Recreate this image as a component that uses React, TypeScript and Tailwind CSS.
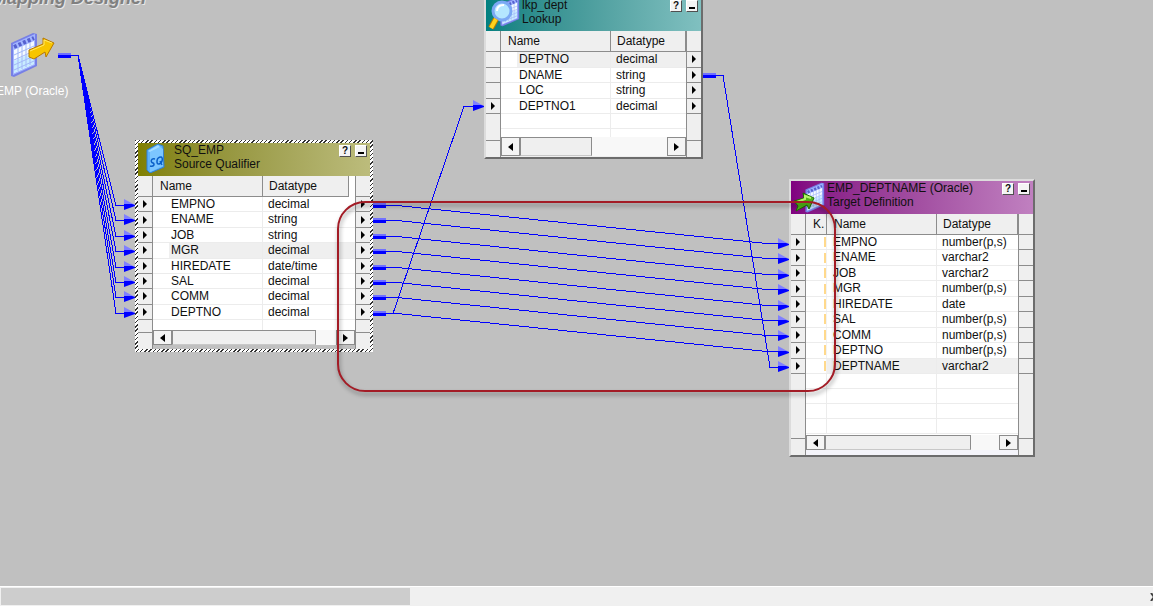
import type { ReactNode } from "react";
import clsx from "clsx";

type Port = {
  name: string;
  datatype: string;
  input?: boolean;
  output?: boolean;
  selected?: boolean;
};

type NodeProps = {
  title: string;
  kind: string;
  icon: ReactNode;
  ports: Port[];
  blanks: number;
  keyColumn?: boolean;
  className: string;
  titleClass: string;
  columnsClass: string;
  headClass: string;
  portsClass: string;
  footClass: string;
  scrollClass: string;
  thumbClass: string;
};

const sourcePorts: Port[] = [
  { name: "EMPNO", datatype: "decimal", input: true, output: true },
  { name: "ENAME", datatype: "string", input: true, output: true },
  { name: "JOB", datatype: "string", input: true, output: true },
  {
    name: "MGR",
    datatype: "decimal",
    input: true,
    output: true,
    selected: true,
  },
  { name: "HIREDATE", datatype: "date/time", input: true, output: true },
  { name: "SAL", datatype: "decimal", input: true, output: true },
  { name: "COMM", datatype: "decimal", input: true, output: true },
  { name: "DEPTNO", datatype: "decimal", input: true, output: true },
];

const lookupPorts: Port[] = [
  { name: "DEPTNO", datatype: "decimal", output: true, selected: true },
  { name: "DNAME", datatype: "string", output: true },
  { name: "LOC", datatype: "string", output: true },
  { name: "DEPTNO1", datatype: "decimal", input: true, output: true },
];

const targetPorts: Port[] = [
  { name: "EMPNO", datatype: "number(p,s)", input: true },
  { name: "ENAME", datatype: "varchar2", input: true },
  { name: "JOB", datatype: "varchar2", input: true },
  { name: "MGR", datatype: "number(p,s)", input: true },
  { name: "HIREDATE", datatype: "date", input: true },
  { name: "SAL", datatype: "number(p,s)", input: true },
  { name: "COMM", datatype: "number(p,s)", input: true },
  { name: "DEPTNO", datatype: "number(p,s)", input: true },
  { name: "DEPTNAME", datatype: "varchar2", input: true, selected: true },
];

function SheetIcon() {
  return (
    <g>
      <path d="M2 11 L24 1 L28 2 V34 L5 45 L2 44 Z" fill="#7780e6" />
      <path d="M4 12 L26 2 V33 L4 43 Z" fill="#a3b6ff" />
      <path d="M5 18 L25 9 V32 L5 41 Z" fill="#f4faff" />
      <path d="M5 29 L25 20 V32 L5 41 Z" fill="#c8ecff" />
      <path
        d="M5 23 L25 14 M5 28 L25 19 M5 33 L25 24 M5 38 L25 29 M9 15 V39 M13 13 V37 M17 11 V35 M21 10 V33"
        stroke="#a3b8f8"
        strokeWidth="1"
        fill="none"
      />
      <path
        d="M5 15 L25 6"
        stroke="#5661cf"
        strokeWidth="4"
        strokeDasharray="3 2"
      />
    </g>
  );
}

function SourceIcon() {
  return (
    <svg width="46" height="46" viewBox="0 0 46 46" aria-hidden="true">
      <SheetIcon />
      <path
        d="M20 18 L34 12 V6 L45 11 L37 25 L36 20 L25 27 L20 25 Z"
        fill="#f7c500"
        stroke="#b87900"
        strokeWidth="1"
      />
      <path
        d="M21 19 L35 13 V8 L43 11"
        fill="none"
        stroke="#ffe96b"
        strokeWidth="1"
      />
    </svg>
  );
}

function QualifierIcon() {
  return (
    <svg width="20" height="30" viewBox="0 0 20 30" aria-hidden="true">
      <path
        d="M1 7 L12 1 L17 3 L18 24 L4 30 L1 27 Z"
        fill="#5cb2fb"
        stroke="#2f7fd8"
      />
      <path d="M4 9 L14 4 L17 6 V23 L4 29 Z" fill="#7cc6ff" />
      <path d="M2 8 L12 2 L14 4 L4 9 Z" fill="#a5dcff" />
      <path
        d="M9 16 C5 15 4 19 7 20 C9 21 8 24 4 23 M15 14 C10 14 10 22 13 21 C17 20 17 14 15 14 M14 18 L16 22"
        fill="none"
        stroke="#0a5fc8"
        strokeWidth="1.5"
      />
    </svg>
  );
}

function LookupIcon() {
  return (
    <svg width="32" height="32" viewBox="0 0 32 32" aria-hidden="true">
      <g transform="translate(11 -1) scale(.72 .65)">
        <SheetIcon />
      </g>
      <circle
        cx="14"
        cy="13"
        r="9"
        fill="#b4e6ff"
        stroke="#7ba8f4"
        strokeWidth="3"
      />
      <path
        d="M9 13 C9 9 12 7 16 7"
        fill="none"
        stroke="#ffffff"
        strokeWidth="2"
      />
      <path d="M8 21 L3 30" stroke="#b97800" strokeWidth="6" />
      <path d="M8 21 L3 30" stroke="#ffd21c" strokeWidth="4" />
    </svg>
  );
}

function TargetIcon() {
  return (
    <svg width="32" height="33" viewBox="0 0 32 33" aria-hidden="true">
      <g transform="translate(11 1) scale(.72 .68)">
        <SheetIcon />
      </g>
      <path
        d="M1 20 L11 17 L10 12 L21 17 L16 28 L14 24 L3 30 L5 25 Z"
        fill="#4fb416"
        stroke="#1c6d00"
      />
      <path
        d="M4 21 L12 18 L12 15 L18 17"
        fill="none"
        stroke="#b5f36a"
        strokeWidth="2"
      />
    </svg>
  );
}

function Gutter({
  props,
  side,
}: {
  props: NodeProps;
  side: "input" | "output";
}) {
  return (
    <div
      className={clsx(
        "flex w-[15px] shrink-0 flex-col border-[#8c8c8c] bg-[#efefef]",
        side === "input" ? "border-r" : "border-l",
      )}
    >
      <div className="h-[21px] border-b border-[#8c8c8c]" />
      <div className={clsx("grid auto-rows-fr", props.portsClass)}>
        {props.ports.map((port) => (
          <div
            key={port.name}
            className="flex items-center justify-center border-b border-[#8c8c8c]"
          >
            {port[side] && (
              <svg width="4" height="8" viewBox="0 0 4 8" aria-hidden="true">
                <path d="M0 0 L4 4 L0 8 Z" fill="#000" />
              </svg>
            )}
          </div>
        ))}
      </div>
      <div className="flex-1" />
      <div className="h-[17px] border-t border-[#8c8c8c]" />
    </div>
  );
}

function HeaderCell({
  children,
  className,
}: {
  children: ReactNode;
  className: string;
}) {
  return (
    <th
      className={clsx(
        "border-r border-b border-[#8c8c8c] bg-[#efefef] text-left leading-5 font-normal",
        className,
      )}
    >
      {children}
    </th>
  );
}

function ScrollButton({ left }: { left?: boolean }) {
  return (
    <button
      type="button"
      aria-label={left ? "Scroll left" : "Scroll right"}
      className="flex w-[19px] shrink-0 items-center justify-center border border-[#8c8c8c] bg-[#f4f4f4]"
    >
      <svg width="5" height="8" viewBox="0 0 5 8" aria-hidden="true">
        <path d={left ? "M5 0 L0 4 L5 8 Z" : "M0 0 L5 4 L0 8 Z"} fill="#000" />
      </svg>
    </button>
  );
}

function TitleButton({
  label,
  children,
}: {
  label: string;
  children: ReactNode;
}) {
  return (
    <button
      type="button"
      aria-label={label}
      className="flex h-3 w-3 items-center justify-center border border-t-white border-r-[#505050] border-b-[#505050] border-l-white bg-[#f4f4f4] text-[10px] leading-3 font-bold"
    >
      {children}
    </button>
  );
}

function MappingNode(props: NodeProps) {
  const { ports, keyColumn, columnsClass } = props;

  return (
    <section className={clsx("absolute flex flex-col", props.className)}>
      {/* Title */}

      <header
        className={clsx(
          "flex h-[33px] shrink-0 items-start bg-linear-to-r",
          props.titleClass,
        )}
      >
        <div className="flex w-9 shrink-0 justify-center">{props.icon}</div>
        <div className="flex-1 leading-[14px] whitespace-nowrap">
          <h2>{props.title}</h2>
          <p>{props.kind}</p>
        </div>
        <div className="flex gap-1 pt-[2px] pr-[3px]">
          <TitleButton label="Help">?</TitleButton>
          <TitleButton label="Minimize">
            <span className="mt-1 h-[2px] w-[6px] bg-black" />
          </TitleButton>
        </div>
      </header>

      {/* Ports */}

      <div className="flex min-h-0 flex-1">
        <Gutter props={props} side="input" />

        <div className="flex min-w-0 flex-1 flex-col bg-white">
          <table className="block">
            <thead className="block h-[21px]">
              <tr className={clsx("grid h-[18px]", columnsClass)}>
                {keyColumn && <HeaderCell className="pl-[7px]">K.</HeaderCell>}
                <HeaderCell className="pl-[7px]">Name</HeaderCell>
                <HeaderCell className={props.headClass}>Datatype</HeaderCell>
              </tr>
            </thead>
            <tbody className={clsx("grid auto-rows-fr", props.portsClass)}>
              {ports.map((port) => (
                <tr
                  key={port.name}
                  className={clsx(
                    "grid border-b border-[#ececec] leading-[14px]",
                    columnsClass,
                  )}
                >
                  {keyColumn && (
                    <td className="flex items-center justify-end border-r border-[#f2f2f2]">
                      <span className="h-[10px] w-[2px] bg-[#ffd98c]" />
                    </td>
                  )}
                  <td
                    className={clsx(
                      "border-r border-[#ececec]",
                      !keyColumn && "pl-4",
                    )}
                  >
                    <div
                      className={clsx(
                        "h-full",
                        keyColumn ? "pl-[6px]" : "pl-[2px]",
                        port.selected && "bg-[#efefef]",
                      )}
                    >
                      {port.name}
                    </div>
                  </td>
                  <td
                    className={clsx(
                      "pl-[5px]",
                      port.selected && "bg-[#efefef]",
                    )}
                  >
                    {port.datatype}
                  </td>
                </tr>
              ))}
            </tbody>
          </table>

          <div className="min-h-0 flex-1 overflow-hidden">
            {Array.from({ length: props.blanks }, (_, i) => (
              <div
                key={i}
                className={clsx(
                  "grid h-[15px] border-b border-[#ececec]",
                  columnsClass,
                )}
              >
                {keyColumn && <div className="border-r border-[#ececec]" />}
                <div className="border-r border-[#ececec]" />
              </div>
            ))}
          </div>

          {/* Scrollbar */}

          <div
            className={clsx("flex shrink-0 bg-[#f8f8f8]", props.scrollClass)}
          >
            <ScrollButton left />
            <div
              className={clsx(
                "border border-[#8c8c8c] border-b-[#c8c8c8] bg-[#efefef]",
                props.thumbClass,
              )}
            />
            <div className="flex-1" />
            <ScrollButton />
          </div>
          <div className={clsx("shrink-0", props.footClass)} />
        </div>

        <Gutter props={props} side="output" />
      </div>
    </section>
  );
}

function Arrow({ x, y }: { x: number; y: number }) {
  return (
    <g>
      <path d={`M${x} ${y - 6} L${x + 11} ${y} H${x} Z`} fill="#8080ff" />
      <path
        d={`M${x} ${y - 1} H${x + 8} L${x + 11} ${y} V${y + 1} L${x} ${y + 5} Z`}
        fill="#00f"
      />
    </g>
  );
}

function Stub({ x, y }: { x: number; y: number }) {
  return (
    <g>
      <rect x={x} y={y - 2} width="13" height="2" fill="#7070ff" />
      <rect x={x} y={y} width="13" height="3" fill="#00f" />
    </g>
  );
}

function Links() {
  const rowHeight = 15.4;
  const rows = sourcePorts.map((_, i) => Math.round(i * rowHeight));

  return (
    <svg
      width="1153"
      height="586"
      viewBox="0 0 1153 586"
      className="pointer-events-none absolute top-0 left-0"
      aria-hidden="true"
    >
      <g fill="none" stroke="#00f" strokeWidth="1" shapeRendering="crispEdges">
        {rows.map((y) => (
          <path key={y} d={`M71 55.5 H78 L116 ${y + 205.5} H124`} />
        ))}
        {rows.map((y) => (
          <path
            key={y}
            d={`M385 ${y + 205.5} H397 L767 ${y + 243.5} H778`}
          />
        ))}
        <path d="M385 313.5 H393 L464 106.5 H473" />
        <path d="M716 75.5 H723 L770 367.5 H778" />
      </g>
      <Stub x={58} y={55} />
      <Stub x={703} y={75} />
      <Arrow x={473} y={106} />
      <Arrow x={778} y={367} />
      {rows.map((y) => (
        <g key={y}>
          <Arrow x={124} y={y + 205} />
          <Stub x={373} y={y + 205} />
          <Arrow x={778} y={y + 244} />
        </g>
      ))}
    </svg>
  );
}

export default function App() {
  return (
    <div className="flex h-screen flex-col overflow-hidden bg-[#c0c0c0] font-['Liberation_Sans',Arial,sans-serif] text-[12px] text-[#101010]">
      <main className="relative flex-1 overflow-hidden">
        <h1 className="absolute -top-3 -left-2 text-[18px] leading-5 font-bold whitespace-nowrap text-[#808080] italic [text-shadow:1px_1px_0_#e8e8e8]">
          Mapping Designer
        </h1>

        {/* Source */}

        <div className="absolute top-8 -left-1 flex flex-col gap-[6px] whitespace-nowrap text-white">
          <div className="pl-[13px]">
            <SourceIcon />
          </div>
          <span className="leading-[14px]">EMP (Oracle)</span>
        </div>

        {/* Transformations */}

        <MappingNode
          title="SQ_EMP"
          kind="Source Qualifier"
          icon={<QualifierIcon />}
          ports={sourcePorts}
          blanks={1}
          className="top-[140px] left-[135px] h-[212px] w-[238px] bg-[repeating-linear-gradient(135deg,#303030_0px,#303030_1px,#ffffff_1px,#ffffff_3px)] p-[3px]"
          titleClass="from-[#808000] to-[#bcbc7c]"
          columnsClass="grid-cols-[110px_1fr]"
          headClass="mr-[6px] pl-[6px]"
          portsClass="h-[123px]"
          footClass="h-1 bg-[#c0c0c0]"
          scrollClass="h-[15px]"
          thumbClass="w-[144px]"
        />

        <MappingNode
          title="lkp_dept"
          kind="Lookup"
          icon={<LookupIcon />}
          ports={lookupPorts}
          blanks={2}
          className="-top-1 left-[484px] h-[163px] w-[219px] border-2 border-t-[#dcdcdc] border-r-[#6c6c6c] border-b-[#6c6c6c] border-l-[#dcdcdc]"
          titleClass="from-[#008080] to-[#80c0c0]"
          columnsClass="grid-cols-[110px_1fr]"
          headClass="pl-[6px]"
          portsClass="h-[62px]"
          footClass="h-px bg-[#efefef]"
          scrollClass="h-[19px]"
          thumbClass="w-[72px]"
        />

        <MappingNode
          title="EMP_DEPTNAME (Oracle)"
          kind="Target Definition"
          icon={<TargetIcon />}
          ports={targetPorts}
          blanks={4}
          keyColumn
          className="top-[179px] left-[789px] h-[278px] w-[246px] border-2 border-t-[#dcdcdc] border-r-[#6c6c6c] border-b-[#6c6c6c] border-l-[#dcdcdc]"
          titleClass="from-[#800080] to-[#c080c0]"
          columnsClass="grid-cols-[21px_110px_1fr]"
          headClass="pl-[6px]"
          portsClass="h-[139px]"
          footClass="h-[5px] bg-[#f4f4fa]"
          scrollClass="h-[15px]"
          thumbClass="w-[146px]"
        />

        <Links />

        {/* Highlight */}

        <div className="pointer-events-none absolute top-[201px] left-[337px] h-[191px] w-[499px] rounded-[28px] border-2 border-[#a31c26] drop-shadow-[1px_3px_2px_rgba(0,0,0,0.4)]" />
      </main>

      {/* Canvas scrollbar */}

      <footer className="flex h-5 items-center justify-between border-t border-white bg-[#f0f0f0] pl-px">
        <div className="h-[17px] w-[409px] bg-[#cdcdcd]" />
        <button type="button" aria-label="Scroll right" className="w-[3px]">
          <svg width="5" height="8" viewBox="0 0 5 8" aria-hidden="true">
            <path
              d="M1 0 L4 4 L1 8"
              fill="none"
              stroke="#404040"
              strokeWidth="2"
            />
          </svg>
        </button>
      </footer>
    </div>
  );
}
